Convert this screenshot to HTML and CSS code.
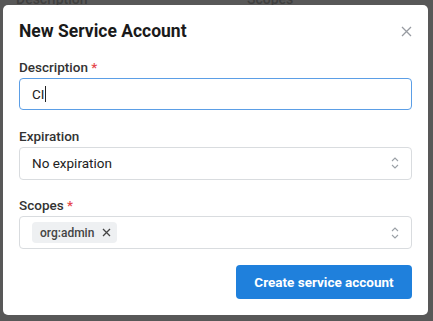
FILE: index.html
```html
<!DOCTYPE html>
<html lang="en">
  <head>
    <meta charset="utf-8">
    <title>New Service Account</title>
    <link rel="stylesheet" href="styles.css">
  </head>
  <body>
  <div class="page">
    <div class="page-head">
      <span class="col-desc">Description</span>
      <span class="col-scopes">Scopes</span>
    </div>
  </div>

  <div class="overlay">
    <div class="modal">
      <div class="modal-head">
        <h2>New Service Account</h2>
        <svg class="close" width="11" height="11" viewBox="0 0 11 11"><path d="M1 1L10 10M10 1L1 10" stroke="#979ba1" stroke-width="1.3" fill="none"/></svg>
      </div>

      <div class="field first">
        <label>Description <span class="req">*</span></label>
        <div class="input focus">CI<span class="caret"></span></div>
      </div>

      <div class="field">
        <label>Expiration</label>
        <div class="input select">
          <span>No expiration</span>
          <svg class="chev" width="8" height="14" viewBox="0 0 8 14"><path d="M1 5L4 2L7 5M1 9L4 12L7 9" stroke="#9aa0a6" stroke-width="1.1" fill="none"/></svg>
        </div>
      </div>

      <div class="field">
        <label>Scopes <span class="req">*</span></label>
        <div class="input select tags">
          <span class="tag">org:admin
            <svg width="9" height="9" viewBox="0 0 9 9"><path d="M1 1L8 8M8 1L1 8" stroke="#444" stroke-width="1.3" fill="none"/></svg>
          </span>
          <svg class="chev" width="8" height="14" viewBox="0 0 8 14"><path d="M1 5L4 2L7 5M1 9L4 12L7 9" stroke="#9aa0a6" stroke-width="1.1" fill="none"/></svg>
        </div>
      </div>

      <div class="actions">
        <button class="btn">Create service account</button>
      </div>
    </div>
  </div>
  </body>
</html>
```

FILE: styles.css
```css
html {
  height: 100%;
}
body {
  margin: 0;
  padding: 0;
  background: #585858;
  font-family: Roboto, "Liberation Sans", sans-serif;
  color: #212529;
  height: 100%;
  overflow: hidden;
}

.page-head {
  display: flex;
  margin-top: -9px;
  padding-left: 16px;
  font-size: 14px;
  font-weight: 500;
  color: #3f3f3f;
}
.col-desc {
  width: 231px;
}

.overlay {
  position: absolute;
  top: 5px;
  left: 3px;
}

.modal {
  width: 425px;
  height: 310px;
  box-sizing: border-box;
  background: #fff;
  border-radius: 5px;
  padding: 16px 16px 0 16px;
}

.modal-head {
  display: flex;
  align-items: center;
  justify-content: space-between;
  height: 20px;
}
.modal-head h2 {
  margin: 0;
  font-size: 17.5px;
  font-weight: 700;
  color: #1a1a1a;
}
.close {
  margin-right: 0;
}

.field {
  margin-top: 16.5px;
}
.field.first {
  margin-top: 17px;
}
.field label {
  display: block;
  font-size: 13.5px;
  font-weight: 500;
  color: #333;
  line-height: 18px;
  margin-bottom: 2px;
}
.req {
  color: #e5484d;
}

.input {
  height: 33px;
  box-sizing: border-box;
  border: 1px solid #d9dcdf;
  border-radius: 4px;
  padding: 0 12px;
  display: flex;
  align-items: center;
  font-size: 13.5px;
  color: #222;
}
.input.focus {
  height: 32px;
  border-color: #5b9ee6;
}
.caret {
  display: inline-block;
  width: 1px;
  height: 16px;
  background: #222;
  margin-left: 1px;
}
.select {
  justify-content: space-between;
}

.tag {
  display: flex;
  align-items: center;
  gap: 8px;
  background: #eef0f2;
  border-radius: 4px;
  padding: 0 6px 0 8px;
  height: 21px;
  font-size: 12px;
  font-weight: 500;
  color: #444;
}

.actions {
  display: flex;
  justify-content: flex-end;
  margin-top: 16px;
}
.btn {
  width: 176px;
  height: 34px;
  border: none;
  border-radius: 4px;
  background: #1f80dc;
  color: #fff;
  font-family: Roboto, "Liberation Sans", sans-serif;
  font-size: 13.5px;
  font-weight: 700;
}
```
